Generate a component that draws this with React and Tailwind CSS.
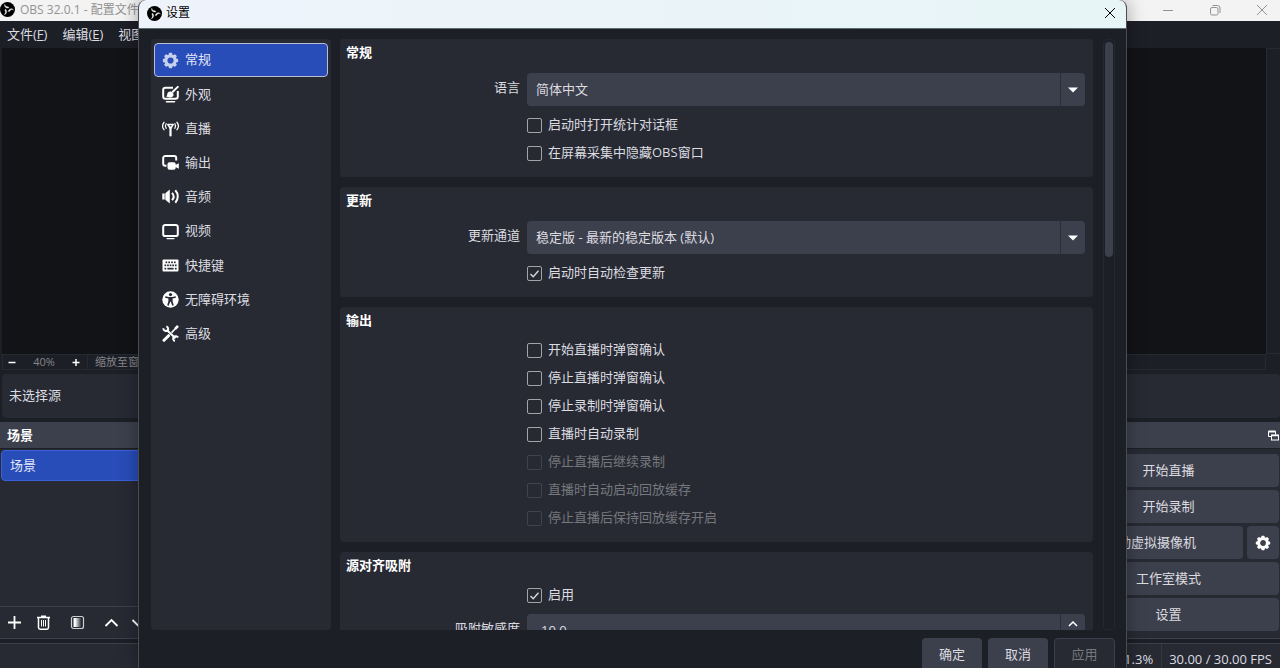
import React, { useState } from 'react';

// --- Icons ---
function ObsLogo({ className }) {
  return (
    <svg viewBox="0 0 30 30" className={className}>
      <circle cx="15" cy="15" r="15" fill="#000" />
      {[0, 120, 240].map(a => (
        <path
          key={a}
          d="M17.500 11.800C12.500 13 8 10 9.500 4.500c.8 3.500 3 5 5.500 5 1.500 0 2.500 1 2.500 2.300z"
          fill="#f3f3f3"
          stroke="#f3f3f3"
          strokeWidth="0.800"
          strokeLinejoin="round"
          transform={`rotate(${a} 15 15)`}
        />
      ))}
    </svg>
  );
}

function GearIcon({ className }) {
  return (
    <svg viewBox="0 0 16 16" className={className} fill="currentColor">
      <circle cx="8" cy="8" r="4.4" fill="none" stroke="currentColor" strokeWidth="3" />
      {[0, 45, 90, 135, 180, 225, 270, 315].map(a => (
        <rect key={a} x="6.4" y="0.8" width="3.2" height="3" rx="0.7" transform={`rotate(${a} 8 8)`} />
      ))}
    </svg>
  );
}

function AppearanceIcon({ className }) {
  return (
    <svg viewBox="0 0 17 17" className={className} fill="none" stroke="currentColor">
      <path d="M11 1.800H3.500A2.300 2.300 0 0 0 1.200 4.100v6.300a2.300 2.300 0 0 0 2.300 2.300h10a2.300 2.300 0 0 0 2.300-2.300V5" strokeWidth="2" />
      <path d="M4.500 15.800h8" strokeWidth="1.600" strokeLinecap="round" />
      <path d="M4 10.600c1.200-.5 1-1.600 1.400-3 .6-1.800 2.600-2.600 4.300-1.700 2 1 2.400 3 1.300 4.300-1.300 1.500-4.500 1.600-7 .4z" fill="currentColor" stroke="none" />
      <path d="M10.800 5.800L15.800.9" strokeWidth="2" strokeLinecap="round" />
    </svg>
  );
}

function StreamIcon({ className }) {
  return (
    <svg viewBox="0 0 17 17" className={className} fill="none" stroke="currentColor">
      <path d="M2 2.300a6 6 0 0 0 0 7.400M15 2.300a6 6 0 0 1 0 7.400" strokeWidth="1.300" strokeLinecap="round" />
      <path d="M4.200 3.700a4 4 0 0 0 0 4.600M12.800 3.700a4 4 0 0 1 0 4.600" strokeWidth="1.200" strokeLinecap="round" />
      <path d="M5.800 4.600h5.400L8.500 8.500z" strokeWidth="1.500" strokeLinejoin="round" />
      <path d="M8.500 7.500v8" strokeWidth="2.200" strokeLinecap="round" />
    </svg>
  );
}

function OutputIcon({ className }) {
  return (
    <svg viewBox="0 0 17 17" className={className}>
      <path d="M4.500 11.800H3.200a2 2 0 0 1-2-2V4a2 2 0 0 1 2-2h9a2 2 0 0 1 2 2v2.500" fill="none" stroke="currentColor" strokeWidth="2" />
      <rect x="5.500" y="8.300" width="8.200" height="7.400" rx="2" fill="currentColor" />
      <path d="M13 11.300l3.800-2.100v5.600L13 12.800z" fill="currentColor" />
    </svg>
  );
}

function AudioIcon({ className }) {
  return (
    <svg viewBox="0 0 17 17" className={className}>
      <path d="M.3 5.500h2.400v6H.3zM3.300 5.300L7.800 1.500v14l-4.500-3.800z" fill="currentColor" />
      <path d="M10 4.800c2 2.200 2 5.200 0 7.400M13.300 2.300c3.300 3.500 3.300 8.900 0 12.400" fill="none" stroke="currentColor" strokeWidth="2" />
    </svg>
  );
}

function VideoIcon({ className }) {
  return (
    <svg viewBox="0 0 17 17" className={className} fill="none" stroke="currentColor">
      <rect x="1.200" y="1.900" width="14.600" height="11.200" rx="2.200" strokeWidth="2" />
      <path d="M5 15.600h7" strokeWidth="1.200" strokeLinecap="round" />
    </svg>
  );
}

function KeyboardIcon({ className }) {
  return (
    <svg viewBox="0 0 17 17" className={className}>
      <rect x="0.500" y="2.500" width="16" height="12" rx="1" fill="currentColor" />
      <g className="fill-[#272a33]">
        {[3.500, 6.300, 9.100, 11.900].map(x => <rect key={x} x={x} y="4.500" width="1.700" height="1.700" />)}
        {[2.500, 5.100, 7.700, 10.300, 12.900].map(x => <rect key={x} x={x} y="7.500" width="1.700" height="1.700" />)}
        <rect x="2.500" y="10.800" width="1.700" height="1.700" />
        <rect x="5.400" y="10.800" width="6.200" height="1.700" />
        <rect x="12.900" y="10.800" width="1.700" height="1.700" />
      </g>
    </svg>
  );
}

function AccessibilityIcon({ className }) {
  return (
    <svg viewBox="0 0 17 17" className={className}>
      <circle cx="8.500" cy="8.500" r="8.200" fill="currentColor" />
      <g className="fill-[#272a33]">
        <circle cx="8.500" cy="3.600" r="1.600" />
        <path d="M3.300 5.300l3.500.6h3.400l3.500-.6.2 1.400-3.300.9v2.700l1.200 4-1.500.5-1.500-4h-.6l-1.500 4-1.500-.5 1.200-4V7.600l-3.300-.9z" />
      </g>
    </svg>
  );
}

function AdvancedIcon({ className }) {
  return (
    <svg viewBox="0 0 17 17" className={className} fill="none" stroke="currentColor">
      <path d="M4.500 4.700l9 8.600" strokeWidth="2" />
      <path d="M1.300 3.200A2.900 2.900 0 0 0 5.600 5.700 2.900 2.900 0 0 0 4.400 1.300" strokeWidth="2" />
      <path d="M12.800 16.200a2.900 2.900 0 0 1-.9-4.500 2.900 2.900 0 0 1 4.200.9" strokeWidth="2" />
      <path d="M9.600 7.600L15.400 1.500" strokeWidth="1.600" />
      <path d="M13.200 3.800L16 .9" strokeWidth="2.600" />
      <path d="M2 15.300l4.600-4.600" strokeWidth="3" strokeLinecap="round" />
    </svg>
  );
}

function PopoutIcon({ className }) {
  return (
    <svg viewBox="0 0 11 11" className={className} fill="none" stroke="currentColor">
      <path d="M3.500 6.500h-3v-5h7v3" />
      <path d="M.5 1.500h7" strokeWidth="2" />
      <rect x="3.500" y="5" width="7" height="5" />
      <path d="M3.500 5.500h7" strokeWidth="1.500" />
    </svg>
  );
}

const categories = [
  { label: '常规', Icon: GearIcon },
  { label: '外观', Icon: AppearanceIcon },
  { label: '直播', Icon: StreamIcon },
  { label: '输出', Icon: OutputIcon },
  { label: '音频', Icon: AudioIcon },
  { label: '视频', Icon: VideoIcon },
  { label: '快捷键', Icon: KeyboardIcon },
  { label: '无障碍环境', Icon: AccessibilityIcon },
  { label: '高级', Icon: AdvancedIcon },
];

const outputOptions = [
  { label: '开始直播时弹窗确认' },
  { label: '停止直播时弹窗确认' },
  { label: '停止录制时弹窗确认' },
  { label: '直播时自动录制' },
  { label: '停止直播后继续录制', disabled: true },
  { label: '直播时自动启动回放缓存', disabled: true },
  { label: '停止直播后保持回放缓存开启', disabled: true },
];

// --- Form pieces ---
function Group({ title, children }) {
  return (
    <fieldset className="shrink-0 rounded bg-[#272a33] pl-1.5 pr-2 pb-[15px]">
      <legend className="float-left h-[34px] w-full pt-[3px] text-[13px] leading-5 font-bold text-white">{title}</legend>
      <div className="clear-both flex flex-col gap-2.5">{children}</div>
    </fieldset>
  );
}

function FieldRow({ id, label, children }) {
  return (
    <div className="flex gap-[7px]">
      <label htmlFor={id} className="w-[174px] pt-1 text-right leading-5">{label}</label>
      <div className="relative flex h-[33px] flex-1 overflow-hidden rounded bg-[#3c404d]">{children}</div>
    </div>
  );
}

function SelectRow({ id, label, value }) {
  return (
    <FieldRow id={id} label={label}>
      <select id={id} className="w-full appearance-none bg-transparent pl-[9px] outline-none">
        <option>{value}</option>
      </select>
      <span className="pointer-events-none absolute inset-y-0 right-0 flex w-[25px] items-center justify-center border-l border-[#2c2f39]">
        <svg viewBox="0 0 10 6" className="h-1.5 w-2.5 fill-white"><path d="M0 .5h10L5 5.500z" /></svg>
      </span>
    </FieldRow>
  );
}

function CheckRow({ label, disabled, checked }) {
  return (
    <label className={disabled ? 'flex h-[18px] items-center gap-1.5 pl-[181px] text-[#76787e]' : 'flex h-[18px] items-center gap-1.5 pl-[181px]'}>
      <span className="relative flex">
        <input
          type="checkbox"
          disabled={disabled}
          defaultChecked={checked}
          className="peer size-[15px] appearance-none rounded-xs border border-[#a3a4a8] disabled:border-[#41444d]"
        />
        <svg viewBox="0 0 15 15" className="pointer-events-none absolute inset-0 hidden size-[15px] fill-none stroke-[#d8d8dc] peer-checked:block">
          <path d="M3.500 8l2.700 2.700 5.300-6" strokeWidth="1.400" />
        </svg>
      </span>
      {label}
    </label>
  );
}

function SettingsDialog() {
  const [active, setActive] = useState('常规');

  return (
    <div role="dialog" aria-label="设置" className="absolute inset-y-0 left-[138px] right-[153px] flex flex-col overflow-hidden rounded-t-lg border-x border-[#4b4c50] bg-[#1d1f26] shadow-[0_0_18px_rgba(0,0,0,0.35)]">
      <div className="flex h-[29px] shrink-0 items-center gap-1 border-b border-[#5c6d6f] bg-linear-to-r from-[#eef3fb] to-[#e7f5f6] px-2 pb-0.5 text-[12px] text-black">
        <ObsLogo className="size-[15px]" />
        <span className="flex-1">设置</span>
        <button aria-label="关闭" className="flex size-4 items-center justify-center">
          <svg viewBox="0 0 12 12" className="size-3 stroke-black"><path d="M1 1l10 10M11 1L1 11" /></svg>
        </button>
      </div>

      <div className="flex min-h-0 flex-1 gap-[9px] pt-2.5 pr-[11px] pl-3">
        <nav className="w-[180px] rounded bg-[#272a33] px-[3px] py-1">
          <div className="grid h-[308px] auto-rows-fr">
            {categories.map(({ label, Icon }) => (
              <button
                key={label}
                onClick={() => setActive(label)}
                className={active === label
                  ? 'flex items-center gap-1.5 rounded border border-[#b9bfd3] bg-[#284cb8] px-[7px] text-[#e4e8f6]'
                  : 'flex items-center gap-1.5 rounded border border-transparent px-[7px]'}
              >
                <Icon className={active === label ? 'size-[17px] text-[#c5cfee]' : 'size-[17px] text-white'} />
                {label}
              </button>
            ))}
          </div>
        </nav>

        <div className="flex min-w-0 flex-1 gap-2.5">
          <div className="flex min-w-0 flex-1 flex-col gap-2.5 overflow-hidden">
            <Group title="常规">
              <SelectRow id="language" label="语言" value="简体中文" />
              <CheckRow label="启动时打开统计对话框" />
              <CheckRow label="在屏幕采集中隐藏OBS窗口" />
            </Group>
            <Group title="更新">
              <SelectRow id="channel" label="更新通道" value="稳定版 - 最新的稳定版本 (默认)" />
              <CheckRow label="启动时自动检查更新" checked />
            </Group>
            <Group title="输出">
              {outputOptions.map(o => <CheckRow key={o.label} {...o} />)}
            </Group>
            <Group title="源对齐吸附">
              <CheckRow label="启用" checked />
              <FieldRow id="sensitivity" label="吸附敏感度">
                <input id="sensitivity" defaultValue="10.0" className="min-w-0 flex-1 bg-transparent pl-3.5 outline-none" />
                <button aria-label="增加" className="flex w-[25px] justify-center border-l border-[#2c2f39] pt-[7px]">
                  <svg viewBox="0 0 10 6" className="h-1.5 w-2.5 fill-none stroke-white"><path d="M1 5l4-4 4 4" strokeWidth="1.500" /></svg>
                </button>
              </FieldRow>
            </Group>
          </div>
          <div className="w-3 rounded border border-[#252831] px-px pt-0.5">
            <div className="h-[215px] rounded bg-[#3c404d]" />
          </div>
        </div>
      </div>

      <div className="flex h-[38px] shrink-0 items-start justify-end gap-1.5 overflow-hidden px-[11px] pt-2">
        <button className="h-[33px] w-[60px] shrink-0 rounded bg-[#3c404d]">确定</button>
        <button className="h-[33px] w-[60px] shrink-0 rounded bg-[#3c404d]">取消</button>
        <button disabled className="h-[33px] w-[61px] shrink-0 rounded border border-[#3c404d] bg-[#272a33] text-[#76787e]">应用</button>
      </div>
    </div>
  );
}

// --- Main window ---
function ScenesDock() {
  return (
    <section className="flex flex-1 flex-col bg-[#272a33]">
      <h2 className="h-[27px] border-b border-[#1d1f26] bg-[#3c404d] pl-[7px] text-[13px] leading-[27px] font-bold text-white">场景</h2>
      <div className="flex-1 px-px pt-px">
        <button className="h-[31px] w-full rounded border border-[#3a60dc] bg-[#284cb8] pl-2 text-left text-[#e4e8f6]">场景</button>
      </div>
      <div className="flex h-[33px] items-center border-y border-[#3c404d] pl-[7px] text-white">
        <button aria-label="添加" className="mr-3.5"><svg viewBox="0 0 15 15" className="size-[15px] fill-none stroke-current"><path d="M7.500 1v13M1 7.500h13" strokeWidth="1.800" /></svg></button>
        <button aria-label="删除" className="mr-[19px]">
          <svg viewBox="0 0 15 15" className="size-[15px] fill-none stroke-current">
            <path d="M1 2.500h13M5 1.200h5" strokeWidth="1.500" />
            <path d="M2.500 3v9.500a1.700 1.700 0 0 0 1.700 1.700h6.600a1.700 1.700 0 0 0 1.700-1.700V3" strokeWidth="1.500" />
            <path d="M5.500 5v6.500M7.500 5v6.500M9.500 5v6.500" strokeWidth="1" />
          </svg>
        </button>
        <button aria-label="滤镜" className="mr-[19px]">
          <svg viewBox="0 0 15 15" className="size-[15px]">
            <defs>
              <linearGradient id="fade"><stop offset="0.200" stopColor="#fff" /><stop offset="1" stopColor="#272a33" /></linearGradient>
            </defs>
            <rect x="1.500" y="1.500" width="12" height="12" rx="2" fill="none" stroke="#cfcfd3" strokeWidth="1.200" />
            <rect x="3.500" y="3" width="8" height="9" fill="url(#fade)" />
          </svg>
        </button>
        <button aria-label="上移" className="mr-3"><svg viewBox="0 0 15 15" className="size-[15px] fill-none stroke-current"><path d="M1.500 11l6-6 6 6" strokeWidth="1.800" /></svg></button>
        <button aria-label="下移"><svg viewBox="0 0 15 15" className="size-[15px] fill-none stroke-current"><path d="M1.500 5l6 6 6-6" strokeWidth="1.800" /></svg></button>
      </div>
    </section>
  );
}

function ControlsDock() {
  const btn = 'h-[33px] w-full rounded bg-[#3c404d]';
  return (
    <section className="w-[226px] border-b border-[#3c404d] bg-[#272a33]">
      <div className="flex h-[27px] items-center justify-end border-b border-[#1d1f26] bg-[#3c404d] pr-px">
        <button aria-label="浮动" className="text-white"><PopoutIcon className="size-[11px]" /></button>
      </div>
      <div className="flex flex-col gap-[3px] pt-[5px] pr-px pl-1">
        <button className={btn}>开始直播</button>
        <button className={btn}>开始录制</button>
        <div className="flex gap-1">
          <button className={btn}>启动虚拟摄像机</button>
          <button aria-label="虚拟摄像机设置" className="flex h-[33px] w-8 shrink-0 items-center justify-center rounded bg-[#3c404d] text-white">
            <GearIcon className="size-4" />
          </button>
        </div>
        <button className={btn}>工作室模式</button>
        <button className={btn}>设置</button>
      </div>
    </section>
  );
}

export default function App() {
  return (
    <div className="relative flex h-screen flex-col overflow-hidden bg-[#1d1f26] font-['Open_Sans','Noto_Sans_CJK_SC',sans-serif] text-[13px] text-[#dcdce0]">
      <header className="flex h-[21px] shrink-0 items-center justify-between bg-[#f3f3f3] pb-0.5 text-[12px] text-[#929292]">
        <div className="flex items-center gap-[5px]">
          <ObsLogo className="size-[15px]" />
          <span className="leading-5">OBS 32.0.1 - 配置文件:</span>
        </div>
        <div className="flex items-center gap-[35px] pr-3">
          <button aria-label="最小化"><svg viewBox="0 0 12 12" className="size-3 fill-none stroke-current"><path d="M1 6.500h10" /></svg></button>
          <button aria-label="还原">
            <svg viewBox="0 0 12 12" className="size-3 fill-none stroke-current">
              <rect x="1.500" y="3.500" width="7.500" height="7.500" rx="1.500" />
              <path d="M3.500 1.500h5a2.500 2.500 0 0 1 2.500 2.500v5" />
            </svg>
          </button>
          <button aria-label="关闭窗口"><svg viewBox="0 0 12 12" className="size-3 stroke-current"><path d="M1 1l10 10M11 1L1 11" /></svg></button>
        </div>
      </header>

      <nav className="flex h-[27px] shrink-0 items-center gap-[15px] pl-[7px]">
        <button>文件(<u>F</u>)</button>
        <button>编辑(<u>E</u>)</button>
        <button>视图(<u>V</u>)</button>
      </nav>

      <div className="flex min-h-0 flex-1 pl-0.5">
        <main className="flex-1 bg-[#121317]" />
        <div className="w-3.5 border-t border-b border-l border-[#272a33]" />
      </div>
      <div className="mr-3.5 ml-0.5 flex h-4 shrink-0 items-center border border-[#272a33] text-[11px] text-[#85868b]">
        <button aria-label="缩小" className="ml-1 text-white"><svg viewBox="0 0 10 10" className="size-2.5 stroke-current"><path d="M1.500 5.500h7" strokeWidth="1.500" /></svg></button>
        <span className="w-[54px] text-center">40%</span>
        <button aria-label="放大" className="text-white"><svg viewBox="0 0 10 10" className="size-2.5 stroke-current"><path d="M1.500 5.500h7M5 2v7" strokeWidth="1.500" /></svg></button>
        <span className="ml-1.5 flex h-full items-center border-l border-[#272a33] pl-[7px]">缩放至窗口</span>
      </div>
      <div className="my-1 ml-0.5 flex h-11 shrink-0 items-center rounded bg-[#272a33] pl-[7px]">未选择源</div>

      <div className="flex h-[217px] shrink-0 gap-1">
        <ScenesDock />
        <ControlsDock />
      </div>
      <footer className="mt-1 flex h-[25px] shrink-0 justify-end border-t border-[#3c404d] bg-[#272a33]">
        <span className="flex items-center pt-2 pr-2">1.3%</span>
        <span className="flex items-center border-l border-[#343741] pt-2 pr-2 pl-[7px]">30.00 / 30.00 FPS</span>
      </footer>

      <SettingsDialog />
    </div>
  );
}
